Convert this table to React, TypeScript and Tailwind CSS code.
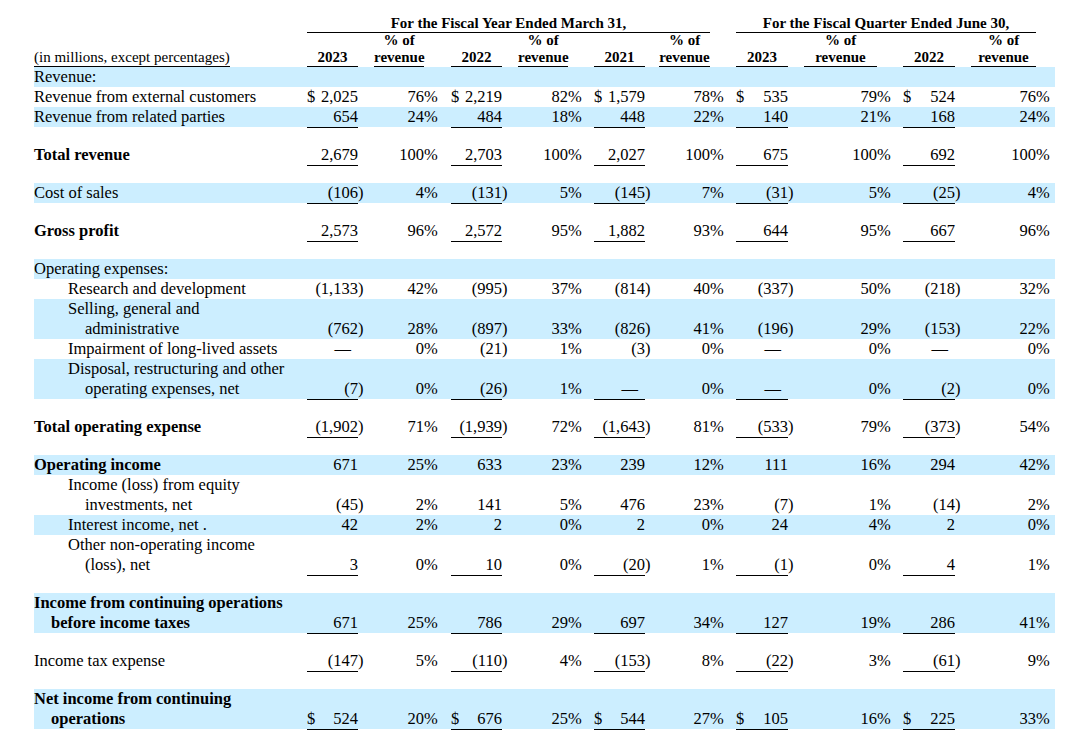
type Row = {
  lines?: string[];
  vals?: string[];
  level?: number;
  bold?: boolean;
  shade?: boolean;
  line?: boolean;
  gap?: boolean;
};

const cols = [
  { w: "w-[51px]", ml: "ml-0", amt: true, head: ["2023"] },
  { w: "w-[50px]", ml: "ml-[16px]", amt: false, head: ["% of", "revenue"] },
  { w: "w-[51px]", ml: "ml-[27px]", amt: true, head: ["2022"] },
  { w: "w-[50px]", ml: "ml-[16px]", amt: false, head: ["% of", "revenue"] },
  { w: "w-[51px]", ml: "ml-[26px]", amt: true, head: ["2021"] },
  { w: "w-[51px]", ml: "ml-[14px]", amt: false, head: ["% of", "revenue"] },
  { w: "w-[52px]", ml: "ml-[26px]", amt: true, head: ["2023"] },
  { w: "w-[73px]", ml: "ml-[16px]", amt: false, head: ["% of", "revenue"] },
  { w: "w-[52px]", ml: "ml-[26px]", amt: true, head: ["2022"] },
  { w: "w-[65px]", ml: "ml-[16px]", amt: false, head: ["% of", "revenue"] },
];

const rows: Row[] = [
  { lines: ["Revenue:"], shade: true },
  {
    lines: ["Revenue from external customers"],
    vals: ["$2,025", "76%", "$2,219", "82%", "$1,579", "78%", "$535", "79%", "$524", "76%"],
  },
  {
    lines: ["Revenue from related parties"],
    shade: true,
    line: true,
    vals: ["654", "24%", "484", "18%", "448", "22%", "140", "21%", "168", "24%"],
  },
  { gap: true },
  {
    lines: ["Total revenue"],
    bold: true,
    line: true,
    vals: ["2,679", "100%", "2,703", "100%", "2,027", "100%", "675", "100%", "692", "100%"],
  },
  { gap: true },
  {
    lines: ["Cost of sales"],
    shade: true,
    line: true,
    vals: ["(106)", "4%", "(131)", "5%", "(145)", "7%", "(31)", "5%", "(25)", "4%"],
  },
  { gap: true },
  {
    lines: ["Gross profit"],
    bold: true,
    line: true,
    vals: ["2,573", "96%", "2,572", "95%", "1,882", "93%", "644", "95%", "667", "96%"],
  },
  { gap: true },
  { lines: ["Operating expenses:"], shade: true },
  {
    lines: ["Research and development"],
    level: 1,
    vals: ["(1,133)", "42%", "(995)", "37%", "(814)", "40%", "(337)", "50%", "(218)", "32%"],
  },
  {
    lines: ["Selling, general and", "administrative"],
    level: 1,
    shade: true,
    vals: ["(762)", "28%", "(897)", "33%", "(826)", "41%", "(196)", "29%", "(153)", "22%"],
  },
  {
    lines: ["Impairment of long-lived assets"],
    level: 1,
    vals: ["—", "0%", "(21)", "1%", "(3)", "0%", "—", "0%", "—", "0%"],
  },
  {
    lines: ["Disposal, restructuring and other", "operating expenses, net"],
    level: 1,
    shade: true,
    line: true,
    vals: ["(7)", "0%", "(26)", "1%", "—", "0%", "—", "0%", "(2)", "0%"],
  },
  { gap: true },
  {
    lines: ["Total operating expense"],
    bold: true,
    line: true,
    vals: ["(1,902)", "71%", "(1,939)", "72%", "(1,643)", "81%", "(533)", "79%", "(373)", "54%"],
  },
  { gap: true },
  {
    lines: ["Operating income"],
    bold: true,
    shade: true,
    vals: ["671", "25%", "633", "23%", "239", "12%", "111", "16%", "294", "42%"],
  },
  {
    lines: ["Income (loss) from equity", "investments, net"],
    level: 1,
    vals: ["(45)", "2%", "141", "5%", "476", "23%", "(7)", "1%", "(14)", "2%"],
  },
  {
    lines: ["Interest income, net ."],
    level: 1,
    shade: true,
    vals: ["42", "2%", "2", "0%", "2", "0%", "24", "4%", "2", "0%"],
  },
  {
    lines: ["Other non-operating income", "(loss), net"],
    level: 1,
    line: true,
    vals: ["3", "0%", "10", "0%", "(20)", "1%", "(1)", "0%", "4", "1%"],
  },
  { gap: true },
  {
    lines: ["Income from continuing operations", "before income taxes"],
    bold: true,
    shade: true,
    line: true,
    vals: ["671", "25%", "786", "29%", "697", "34%", "127", "19%", "286", "41%"],
  },
  { gap: true },
  {
    lines: ["Income tax expense"],
    line: true,
    vals: ["(147)", "5%", "(110)", "4%", "(153)", "8%", "(22)", "3%", "(61)", "9%"],
  },
  { gap: true },
  {
    lines: ["Net income from continuing", "operations"],
    bold: true,
    shade: true,
    line: true,
    vals: ["$524", "20%", "$676", "25%", "$544", "27%", "$105", "16%", "$225", "33%"],
  },
];

function Val({ v }: { v?: string }) {
  if (!v) return null;
  if (v === "—") return <span className="pr-[7px]">—</span>;
  let s = v;
  let dollar = false;
  if (s.startsWith("$")) {
    dollar = true;
    s = s.slice(1);
  }
  let hang = "";
  if (s.endsWith(")") || s.endsWith("%")) {
    hang = s.slice(-1);
    s = s.slice(0, -1);
  }
  return (
    <>
      {dollar && <span className="mr-auto">$</span>}
      <span>{s}</span>
      {hang && <span className="inline-block w-0 whitespace-nowrap">{hang}</span>}
    </>
  );
}

function Line({ r }: { r: Row }) {
  if (r.gap) return <div className="h-[18px]" />;
  const lines = r.lines ?? [];
  return (
    <div className={`flex w-[1021px] items-end ${r.shade ? "bg-[#cceeff]" : ""}`}>
      <div className={`w-[273px] shrink-0 ${r.bold ? "font-bold" : ""}`}>
        {lines.map((l, i) => {
          let pad = "pl-0";
          if (r.level === 1) pad = i === 0 ? "pl-[34px]" : "pl-[51px]";
          else if (i > 0) pad = "pl-[17px]";
          return (
            <div key={i} className={`h-[20px] whitespace-nowrap ${pad}`}>
              {l}
            </div>
          );
        })}
      </div>
      {r.vals &&
        cols.map((c, i) => (
          <div
            key={i}
            className={`${c.w} ${c.ml} flex h-[20px] shrink-0 justify-end whitespace-nowrap ${
              r.line && c.amt ? "-mb-px h-[21px] border-b border-black" : ""
            }`}
          >
            <Val v={r.vals?.[i]} />
          </div>
        ))}
    </div>
  );
}

export default function App() {
  return (
    <main
      className="min-h-screen bg-white pl-[34px] pt-[14px] text-[16.5px] leading-[20px] text-black"
      style={{ fontFamily: '"Liberation Serif", "Times New Roman", serif' }}
    >
      {/* period headers */}
      <div className="flex h-[19px] text-[15px] font-bold leading-[18px]">
        <div className="w-[273px] shrink-0" />
        <div className="w-[403px] shrink-0 border-b border-black text-center">
          For the Fiscal Year Ended March 31,
        </div>
        <div className="ml-[26px] w-[300px] shrink-0 border-b border-black text-center">
          For the Fiscal Quarter Ended June 30,
        </div>
      </div>

      {/* column headers */}
      <div className="flex h-[34px] items-end text-[15px] leading-[17px]">
        <div className="flex h-full w-[273px] shrink-0 items-end">
          <span className="inline-block border-b border-black">
            (in millions, except percentages)
          </span>
        </div>
        {cols.map((c, i) => (
          <div
            key={i}
            className={`${c.w} ${c.ml} flex h-full shrink-0 flex-col justify-end border-b border-black text-center font-bold`}
          >
            {c.head.map((h, j) => (
              <div key={j} className="whitespace-nowrap">
                {h}
              </div>
            ))}
          </div>
        ))}
      </div>

      {rows.map((r, i) => (
        <Line key={i} r={r} />
      ))}
    </main>
  );
}
